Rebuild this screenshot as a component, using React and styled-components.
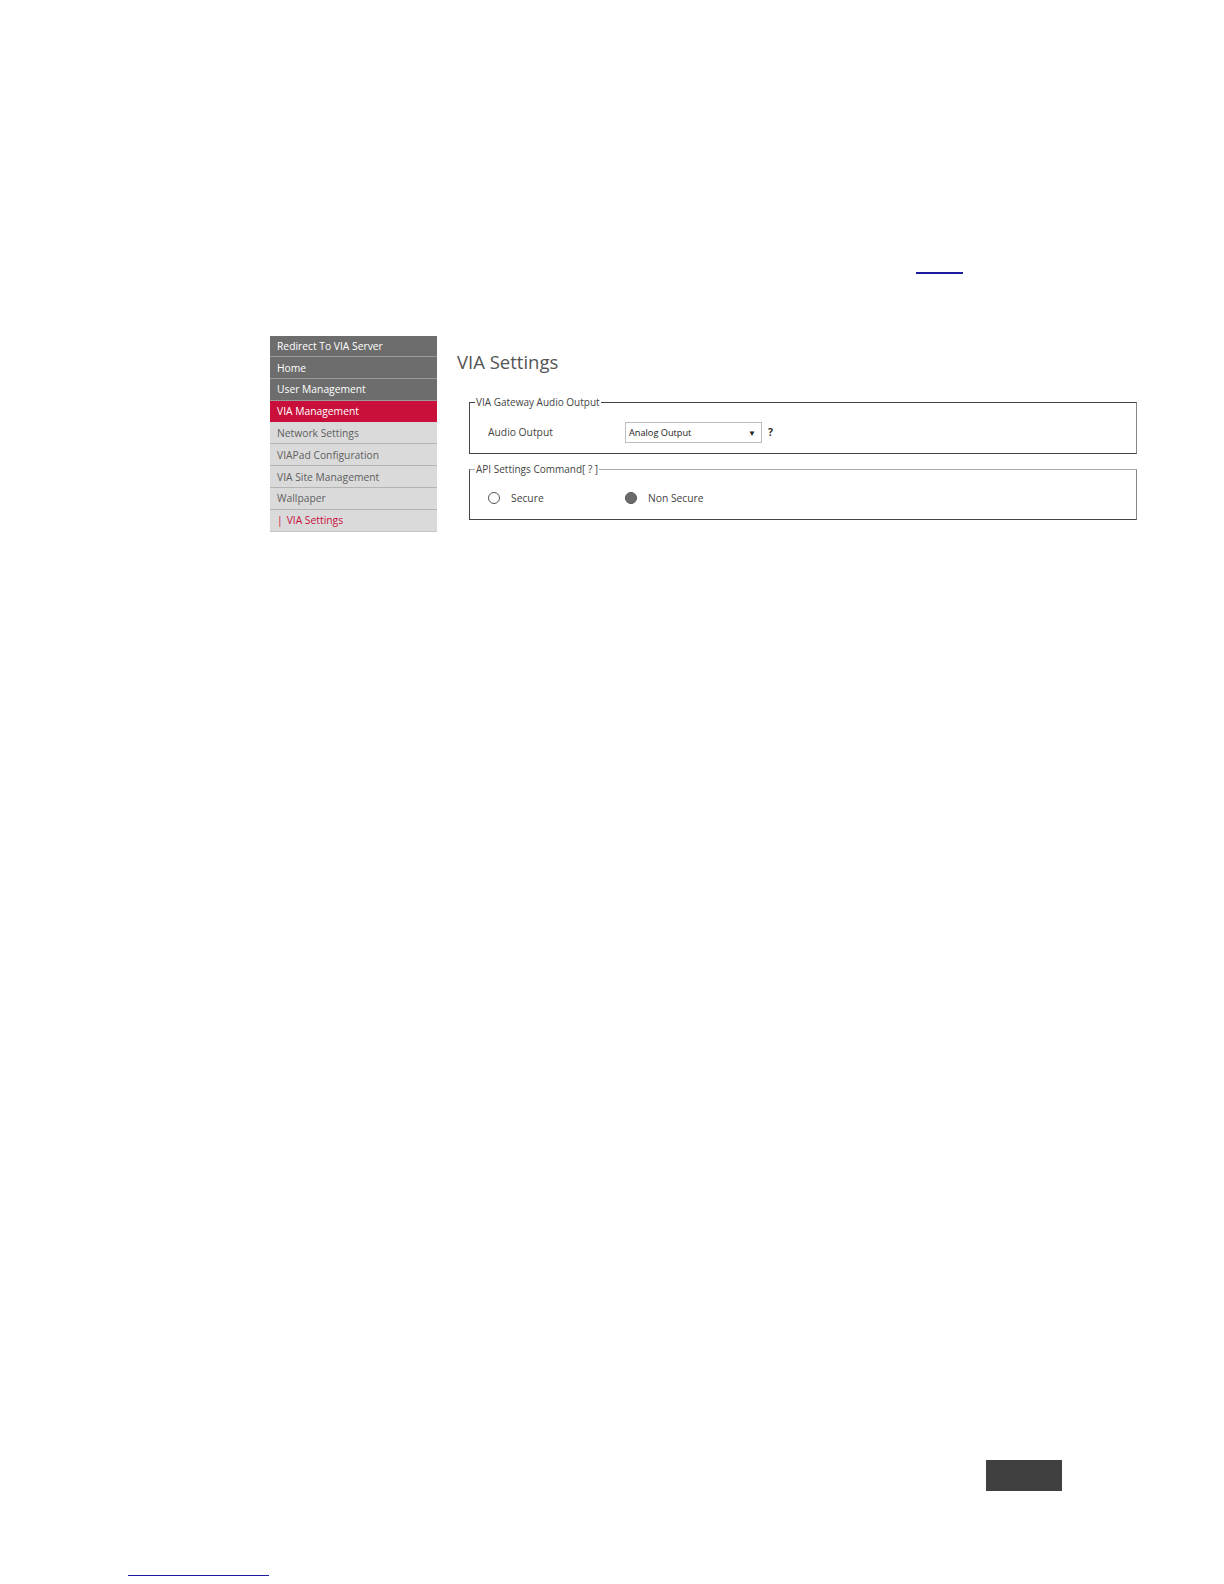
import React from 'react';
import styled, { createGlobalStyle } from 'styled-components';

const GlobalStyle = createGlobalStyle`
  html, body {
    margin: 0;
    padding: 0;
    background: #fff;
  }
  body {
    font-family: 'Open Sans', 'Noto Sans', sans-serif;
  }
`;

const Page = styled.div`
  width: 1224px;
  height: 1584px;
  display: flex;
  flex-direction: column;
  overflow: hidden;
`;

const LinkRule = styled.div`
  margin: ${({ top }) => top}px 0 0 ${({ left }) => left}px;
  width: ${({ width }) => width}px;
  height: 1.5px;
  background: #1c1c9c;
`;

const Figure = styled.div`
  margin: 62px 0 0 270px;
  display: flex;
  align-items: flex-start;
`;

const Sidebar = styled.nav`
  width: 167px;
  display: flex;
  flex-direction: column;
`;

const tones = {
  dark: { bg: '#6d6d6d', fg: '#ffffff', line: '#9a9a9a' },
  active: { bg: '#c8103b', fg: '#ffffff', line: '#d8d8d8' },
  light: { bg: '#dadada', fg: '#5f5f5f', line: '#b4b4b4' },
  current: { bg: '#dadada', fg: '#c8103b', line: '#c4c4c4' },
};

const NavItem = styled.div`
  height: 21.8px;
  box-sizing: border-box;
  padding-left: 7px;
  display: flex;
  align-items: center;
  font-size: 10.3px;
  background: ${({ tone }) => tones[tone].bg};
  color: ${({ tone }) => tones[tone].fg};
  border-bottom: 1px solid ${({ tone }) => tones[tone].line};
  white-space: nowrap;
`;

const Bar = styled.span`
  margin-right: 4px;
`;

const Content = styled.div`
  flex: 1;
  padding-left: 20px;
  display: flex;
  flex-direction: column;
`;

const Title = styled.h1`
  margin: 13px 0 0;
  font-size: 18.5px;
  font-weight: 400;
  color: #555;
  line-height: 26px;
`;

const Group = styled.fieldset`
  margin: ${({ gap }) => gap}px 0 0 12px;
  width: 668px;
  box-sizing: border-box;
  padding: 0 0 ${({ pb }) => pb}px 5px;
  border: 1px solid #444;
  border-top-color: ${({ soft }) => (soft ? '#aaa' : '#444')};
  border-right-color: #888;
`;

const Legend = styled.legend`
  padding: 0 1px;
  font-size: 10px;
  line-height: 15px;
  color: #444;
`;

const Row = styled.div`
  display: grid;
  grid-template-columns: 137px auto;
  align-items: center;
  padding: ${({ pt }) => pt}px 0 0 13px;
  font-size: 10.3px;
  color: #444;
`;

const Field = styled.div`
  display: flex;
  align-items: center;
  gap: 6px;
`;

const Select = styled.div`
  width: 137px;
  height: 21px;
  box-sizing: border-box;
  border: 1px solid #bdbdbd;
  display: flex;
  align-items: center;
  justify-content: space-between;
  padding: 0 5px 0 3px;
  font-size: 9.2px;
  color: #222;
  background: #fff;
`;

const Arrow = styled.span`
  font-size: 8px;
  color: #222;
`;

const Help = styled.span`
  font-weight: 700;
  font-size: 10.5px;
  color: #333;
`;

const Radio = styled.label`
  display: flex;
  align-items: center;
  gap: 11px;
  height: 20px;
`;

const Dot = styled.span`
  width: 12px;
  height: 12px;
  box-sizing: border-box;
  border-radius: 50%;
  border: 1px solid #555;
  background: ${({ checked }) => (checked ? '#6b6b6b' : '#fff')};
`;

const Tab = styled.div`
  margin: 928px 0 0 986px;
  width: 76px;
  height: 31px;
  background: #404040;
`;

const nav = [
  ['Redirect To VIA Server', 'dark'],
  ['Home', 'dark'],
  ['User Management', 'dark'],
  ['VIA Management', 'active'],
  ['Network Settings', 'light'],
  ['VIAPad Configuration', 'light'],
  ['VIA Site Management', 'light'],
  ['Wallpaper', 'light'],
];

export default function App() {
  return (
    <Page>
      <GlobalStyle />
      <LinkRule top={272} left={916} width={47} />
      <Figure>
        <Sidebar>
          {nav.map(([label, tone]) => (
            <NavItem key={label} tone={tone}>
              {label}
            </NavItem>
          ))}
          <NavItem tone="current">
            <Bar>|</Bar>VIA Settings
          </NavItem>
        </Sidebar>
        <Content>
          <Title>VIA Settings</Title>
          <Group gap={20} pb={10}>
            <Legend>VIA Gateway Audio Output</Legend>
            <Row pt={12}>
              <span>Audio Output</span>
              <Field>
                <Select>
                  <span>Analog Output</span>
                  <Arrow>▼</Arrow>
                </Select>
                <Help>?</Help>
              </Field>
            </Row>
          </Group>
          <Group gap={8} soft pb={11}>
            <Legend>API Settings Command[ ? ]</Legend>
            <Row pt={11}>
              <Radio>
                <Dot />
                Secure
              </Radio>
              <Radio>
                <Dot checked />
                Non Secure
              </Radio>
            </Row>
          </Group>
        </Content>
      </Figure>
      <Tab />
      <LinkRule top={84} left={128} width={141} />
    </Page>
  );
}
